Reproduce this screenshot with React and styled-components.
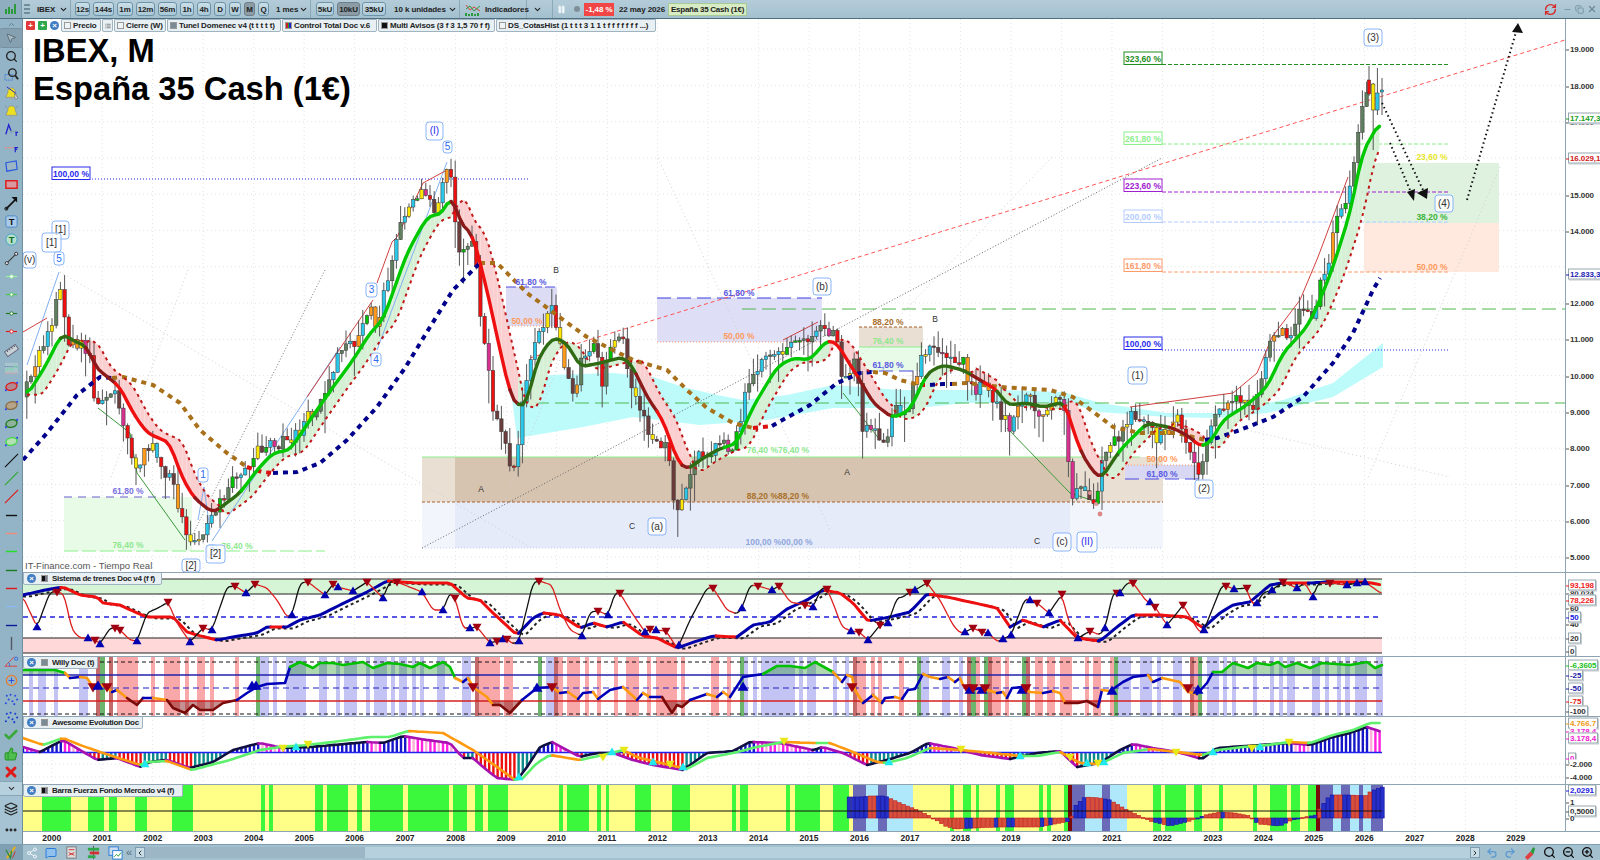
import React from "react"
import styled, { createGlobalStyle } from "styled-components"
import { ChevronDown, ChevronUp, ChevronLeft, ChevronRight, Share2, MessageSquare, Undo2, Redo2, ZoomIn, ZoomOut, Search, Check, ThumbsUp, X, Minus, Copy, RefreshCw, MoreHorizontal, Layers, Pause, List, MousePointer2 } from "lucide-react"

const GlobalStyle = createGlobalStyle`
  html, body { margin: 0; padding: 0; height: 100%; overflow: hidden; background: #fff; }
  #root { height: 100%; }
`
const FONT = `"Liberation Sans", Arial, sans-serif`

// ---------- data helpers ----------
function seeded(s) {
  return () => {
    s = (s * 16807) % 2147483647
    return (s - 1) / 2147483646
  }
}
function lerp(pts, x) {
  if (x <= pts[0][0]) return pts[0][1]
  for (let i = 1; i < pts.length; i++) {
    if (x <= pts[i][0]) {
      const [a, b] = [pts[i - 1], pts[i]]
      return a[1] + ((b[1] - a[1]) * (x - a[0])) / (b[0] - a[0] || 1)
    }
  }
  return pts[pts.length - 1][1]
}
function resample(pts, step = 4.2, k = 1) {
  const out = []
  for (let x = pts[0][0]; x <= pts[pts.length - 1][0]; x += step) out.push([x, lerp(pts, x)])
  return out.map((p, i) => {
    let sum = 0, n = 0
    for (let j = Math.max(0, i - k); j <= Math.min(out.length - 1, i + k); j++) { sum += out[j][1]; n++ }
    return [p[0], sum / n]
  })
}
const pathOf = (pts) => "M" + pts.map((p) => `${p[0].toFixed(1)} ${p[1].toFixed(1)}`).join(" L")

function colored(pts, colorOf, width, dash) {
  const segs = []
  let cur = null
  for (let i = 1; i < pts.length; i++) {
    const c = colorOf(pts[i - 1], pts[i])
    if (cur && cur.c === c) cur.pts.push(pts[i])
    else { cur = { c, pts: [pts[i - 1], pts[i]] }; segs.push(cur) }
  }
  return segs.map((s, i) => (
    <path key={i} d={pathOf(s.pts)} fill="none" stroke={s.c} strokeWidth={width} strokeDasharray={dash} strokeLinecap={dash ? "butt" : "round"} strokeLinejoin="round" />
  ))
}
const xOfYear = (y) => 51.7 + (y - 2000) * 50.49
const yOfPrice = (v) => 557 - (v - 5000) * 0.03628

// ---------- price ----------
const price = [[24,397],[40,350],[52,325],[60,282],[67,337],[88,350],[95,400],[117,397],[137,470],[150,445],[173,487],[187,543],[213,520],[230,480],[250,460],[267,443],[290,440],[323,400],[337,353],[353,347],[370,310],[377,333],[390,263],[403,220],[423,187],[437,213],[447,163],[453,180],[457,253],[473,243],[480,307],[493,407],[510,460],[517,467],[520,413],[533,347],[553,310],[557,337],[573,397],[582,360],[597,347],[603,400],[608,347],[623,343],[633,387],[647,430],[667,447],[677,517],[687,493],[693,460],[720,443],[733,450],[743,407],[747,383],[777,350],[813,337],[818,323],[837,337],[843,380],[857,363],[863,430],[883,440],[897,410],[907,413],[920,360],[930,345],[940,360],[963,360],[972,390],[990,387],[1000,417],[1010,427],[1025,393],[1043,417],[1060,393],[1067,417],[1070,497],[1077,490],[1097,500],[1103,447],[1117,443],[1130,410],[1157,437],[1180,420],[1197,467],[1200,473],[1213,413],[1233,397],[1253,410],[1270,337],[1293,333],[1298,307],[1313,320],[1320,280],[1330,253],[1333,227],[1347,200],[1357,147],[1360,113],[1367,93],[1369,80],[1373,107],[1377,93],[1382,92]]

const tunnel = resample([[27,395],[45,367],[62,333],[72,340],[88,347],[95,367],[120,387],[133,413],[147,433],[170,443],[180,473],[193,497],[213,513],[240,493],[257,470],[273,453],[290,450],[310,420],[333,387],[353,360],[370,333],[383,320],[407,253],[427,217],[443,213],[452,193],[460,223],[473,235],[487,290],[500,350],[510,393],[517,407],[527,403],[537,360],[553,337],[567,343],[580,367],[600,363],[623,357],[633,367],[647,397],[663,420],[677,460],[687,470],[700,460],[717,450],[737,443],[753,407],[777,367],[793,358],[810,360],[827,340],[837,343],[847,360],[860,380],[873,403],[893,418],[910,410],[927,373],[943,365],[963,370],[980,380],[997,390],[1007,405],[1027,403],[1043,407],[1065,402],[1073,430],[1083,457],[1100,480],[1107,470],[1120,450],[1147,423],[1173,428],[1190,437],[1200,447],[1210,443],[1223,420],[1247,405],[1267,387],[1283,353],[1307,327],[1320,300],[1333,267],[1350,213],[1363,150],[1368,143],[1382,118]])
const G = "#00c800", DG = "#2e6b12", R = "#ee1010", DR = "#8c1a1a"
const tunnelPhases = [[62,G],[90,DG],[118,DR],[195,R],[222,DR],[245,DG],[452,G],[475,DR],[510,R],[522,DR],[640,DG],[660,DR],[685,R],[692,DR],[725,DG],[832,G],[860,R],[895,DR],[930,G],[975,DG],[985,DR],[1000,R],[1066,DG],[1085,R],[1105,DR],[1122,DG],[1147,G],[1172,DG],[1195,DR],[1205,R],[1400,G]]
const phaseAt = (x) => tunnelPhases.find((p) => x <= p[0])[1]
const isUpPhase = (x) => [G, DG].includes(phaseAt(x))
const tunnelEdge = (x) => lerp(tunnel, x - 13) + (isUpPhase(x) ? 3 : -2)

const NAVY = "#00008b", BROWN = "#a8701a"
const longMa = [[23,460,NAVY],[47,433,NAVY],[77,395,NAVY],[100,377,NAVY],[112,378,NAVY],[123,377,BROWN],[153,385,BROWN],[180,403,BROWN],[200,430,BROWN],[227,453,BROWN],[247,467,BROWN],[262,472,"#dd1010"],[273,473,"#dd1010"],[297,472,NAVY],[320,463,NAVY],[347,440,NAVY],[377,407,NAVY],[405,368,NAVY],[430,327,NAVY],[453,290,NAVY],[480,263,NAVY],[497,263,BROWN],[527,293,BROWN],[573,327,BROWN],[587,337,BROWN],[633,360,BROWN],[667,370,BROWN],[687,390,BROWN],[707,408,BROWN],[733,423,BROWN],[753,428,BROWN],[772,426,"#dd1010"],[777,423,NAVY],[810,405,NAVY],[837,383,NAVY],[860,373,NAVY],[873,372,NAVY],[885,373,BROWN],[900,380,BROWN],[920,385,BROWN],[930,385,"#dd1010"],[943,384,NAVY],[952,384,NAVY],[967,383,BROWN],[1000,387,BROWN],[1050,390,BROWN],[1073,397,BROWN],[1100,417,BROWN],[1113,427,BROWN],[1140,433,BROWN],[1177,433,BROWN],[1205,440,BROWN],[1217,438,NAVY],[1240,430,NAVY],[1273,417,NAVY],[1303,397,NAVY],[1333,363,NAVY],[1353,333,NAVY],[1373,290,NAVY],[1380,278,NAVY]]

const cloud = [[510,383],[527,382],[550,375],[613,373],[653,377],[683,387],[717,395],[743,400],[787,395],[833,385],[900,390],[943,390],[1000,390],[1063,392],[1100,403],[1167,413],[1217,413],[1283,400],[1333,383],[1383,343],[1383,367],[1333,397],[1267,413],[1217,418],[1167,417],[1100,412],[1067,403],[967,403],[917,408],[833,408],[767,420],[700,425],[633,417],[583,427],[517,438]]

const rnd = seeded(4711)
const pick = (list) => {
  const r = rnd()
  let acc = 0
  for (const [c, w] of list) { acc += w; if (r <= acc) return c }
  return list[0][0]
}
const lastCandles = [
  { x: 1369, top: 80, h: 14, hi: 66, lo: 96, fill: "#ee1010" },
  { x: 1373.2, top: 84, h: 26, hi: 83, lo: 150, fill: "#ffe600" },
  { x: 1377.4, top: 93, h: 17, hi: 68, lo: 115, fill: "#2ac7e8" },
  { x: 1382, top: 90, h: 2, hi: 78, lo: 115, fill: "#2ac7e8" },
]
const candles = (() => {
  const out = []
  let prev = lerp(price, 24)
  for (let x = 26.8; x < 1367; x += 4.2) {
    const close = lerp(price, x) + (x > 1340 ? (rnd() - 0.5) * 5 : (rnd() - 0.5) * 15)
    const up = close < prev
    const fill = up
      ? pick([["#2ac7e8", 0.3], ["#5f7f5f", 0.4], ["#ffe600", 0.12], ["#00c000", 0.1], ["#ff9a1a", 0.08]])
      : pick([["#6b3c3c", 0.34], ["#ee1010", 0.3], ["#d8308f", 0.1], ["#ff9a1a", 0.1], ["#ffe600", 0.08], ["#2ac7e8", 0.08]])
    const top = Math.min(close, prev), bot = Math.max(close, prev)
    out.push({ x, top, h: Math.max(bot - top, 1.5), hi: top - rnd() * 17, lo: bot + rnd() * rnd() * 36, fill })
    prev = close
  }
  return [...out, ...lastCandles]
})()

// ---------- sistema de trenes ----------
const thinLine = [[23,597],[37,627,1],[50,592],[57,592,-1],[64,594],[72,630],[80,638],[88,638,1],[95,640,-1],[100,644,1],[110,628],[115,628,-1],[120,630,-1],[130,640],[137,641,1],[147,613],[160,607],[168,602,-1],[177,623],[190,642,1],[203,628,-1],[212,630,1],[227,587],[235,586,-1],[246,593,1],[255,584,-1],[267,588],[277,600],[287,617],[292,615,1],[300,583],[308,582,-1],[325,595,1],[333,584,-1],[338,587,1],[353,591,1],[367,582,-1],[383,598,1],[390,581],[397,582,-1],[422,592,1],[433,610],[443,610,1],[450,592],[455,598,-1],[463,628],[470,628,1],[477,627,-1],[490,643,1],[497,641,-1],[503,639,1],[507,639,-1],[513,644],[519,641,1],[533,583],[539,581,-1],[552,585],[560,610],[570,630],[582,636,1],[590,612],[598,611,-1],[608,615,1],[615,593],[620,593,-1],[630,610],[645,632,1],[650,629,-1],[656,630,1],[666,631,-1],[677,648],[679,645,1],[690,620],[707,588],[713,588,-1],[727,610],[737,614],[742,608,1],[750,585],[758,586,-1],[772,590,1],[779,586,-1],[790,602],[805,605,-1],[813,607,1],[822,587],[827,589,-1],[833,603],[842,627],[851,631,1],[859,632,-1],[868,640,1],[880,625,-1],[888,623,1],[897,598],[903,597],[910,592,-1],[915,590,1],[927,583,-1],[940,600],[953,625],[960,633],[965,632,1],[973,628,-1],[982,632,-1],[988,633,1],[998,642],[1003,639,1],[1011,635,1],[1025,599],[1030,600,1],[1037,603,-1],[1049,613,1],[1062,594,-1],[1068,620],[1078,638,1],[1090,631,-1],[1100,635],[1105,628,1],[1113,593],[1117,593,-1],[1120,593,1],[1127,583],[1133,583,-1],[1147,602],[1150,602,1],[1155,607,-1],[1167,625,1],[1177,613],[1183,605,-1],[1200,633],[1204,630,1],[1222,585],[1226,586,-1],[1234,589,1],[1247,588,-1],[1251,603],[1257,603,1],[1263,593],[1272,590,1],[1283,582,-1],[1297,588,1],[1305,583],[1313,597,1],[1318,583],[1330,583,-1],[1347,585,1],[1357,583,1],[1365,582,1],[1382,594]]
const thinSmooth = resample(thinLine, 2, 1)
const thickLine = resample([[23,595],[45,590],[63,587],[80,595],[97,597],[103,603],[120,605],[137,613],[147,617],[173,617],[187,632],[197,635],[217,640],[233,637],[257,633],[267,627],[287,627],[300,620],[320,615],[340,605],[367,592],[387,581],[417,583],[450,583],[467,598],[480,600],[493,613],[517,635],[533,618],[543,613],[560,615],[580,628],[593,623],[607,627],[623,622],[643,636],[657,638],[677,648],[697,641],[713,636],[737,637],[753,625],[770,622],[787,609],[807,600],[823,590],[840,593],[853,603],[868,621],[890,617],[910,612],[927,594],[947,597],[970,602],[997,608],[1010,627],[1023,620],[1043,627],[1060,620],[1077,638],[1100,641],[1117,627],[1133,615],[1160,615],[1187,617],[1203,628],[1220,613],[1233,605],[1250,602],[1270,585],[1283,583],[1310,583],[1327,582],[1365,582],[1382,585]], 4.2, 0)

// ---------- willy ----------
const willyLine = [[23,670],[43,670],[55,670],[65,673],[70,678],[80,677],[87,678],[93,687],[100,685],[107,687],[112,692],[117,690],[127,698],[137,705],[143,698],[153,698],[167,700],[173,708],[185,713],[193,705],[200,710],[213,710],[223,703],[237,700],[247,693],[257,687],[267,684],[285,683],[290,667],[300,662],[313,668],[320,663],[333,663],[343,665],[363,662],[373,668],[387,663],[400,664],[413,667],[420,663],[430,668],[443,662],[450,667],[455,678],[463,682],[468,678],[473,687],[480,692],[487,697],[493,705],[500,705],[510,713],[522,700],[537,688],[552,687],[560,693],[568,692],[578,699],[583,693],[593,692],[598,699],[610,690],[623,687],[637,700],[643,693],[650,697],[662,697],[672,713],[677,705],[682,707],[690,700],[707,694],[717,697],[723,692],[730,697],[743,677],[763,674],[777,666],[790,666],[805,668],[815,662],[833,672],[842,682],[847,675],[852,677],[855,690],[863,703],[873,695],[882,703],[885,698],[895,697],[902,699],[908,690],[915,689],[923,674],[930,677],[940,679],[948,677],[955,682],[960,678],[963,685],[967,690],[982,688],[997,693],[1003,692],[1007,698],[1012,688],[1023,687],[1030,692],[1043,693],[1053,691],[1060,693],[1065,703],[1078,703],[1087,701],[1098,707],[1102,690],[1110,691],[1123,682],[1133,677],[1148,675],[1153,682],[1162,678],[1180,682],[1188,692],[1197,694],[1207,683],[1213,672],[1222,672],[1233,663],[1248,668],[1257,663],[1270,665],[1278,662],[1285,667],[1297,663],[1310,668],[1322,663],[1350,665],[1367,662],[1375,668],[1382,665]]
const P = "#c4c4f4", RB = "#f8a8a8", DB = "#c46a6a", GB = "#6db56d"
const willyBands = [[29,33,P],[38,46,P],[54,58,P],[79,88,P],[96,100,DB],[100,105,GB],[109,113,DB],[117,138,RB],[151,155,RB],[164,180,RB],[185,189,RB],[197,205,RB],[210,214,RB],[235,239,RB],[256,260,GB],[260,269,P],[273,277,P],[286,306,P],[319,327,P],[336,340,P],[344,357,P],[366,370,P],[374,387,P],[391,395,P],[399,407,P],[412,416,P],[420,424,P],[437,445,P],[462,471,P],[475,479,DB],[479,500,RB],[504,513,RB],[538,542,GB],[546,554,P],[554,558,DB],[558,563,RB],[567,580,RB],[585,589,RB],[597,601,RB],[614,618,RB],[626,639,RB],[647,651,RB],[656,677,RB],[681,685,RB],[711,719,RB],[727,731,RB],[740,744,GB],[744,748,P],[753,757,P],[761,786,P],[786,795,P],[799,803,P],[807,816,P],[833,837,P],[845,849,P],[853,857,DB],[857,866,RB],[871,875,RB],[878,882,RB],[899,904,RB],[917,921,GB],[921,929,P],[942,950,P],[959,963,P],[967,971,DB],[971,976,GB],[976,980,RB],[984,988,GB],[988,992,DB],[992,1001,RB],[1005,1009,RB],[1022,1026,GB],[1026,1030,DB],[1035,1043,RB],[1047,1055,RB],[1060,1072,RB],[1085,1089,RB],[1093,1101,RB],[1110,1114,RB],[1114,1118,GB],[1118,1131,P],[1140,1152,P],[1157,1161,P],[1173,1182,P],[1190,1194,DB],[1194,1198,RB],[1198,1202,GB],[1207,1219,P],[1223,1227,P],[1232,1236,P],[1253,1257,P],[1270,1274,P],[1279,1283,P],[1287,1295,P],[1312,1320,P],[1325,1329,P],[1337,1341,P],[1345,1350,P],[1355,1367,P],[1376,1383,P]]
const willyTris = [[93,687,-1],[98,686,1],[107,687,-1],[256,686,1],[252,686,1],[473,687,-1],[537,688,1],[552,687,-1],[743,687,1],[852,687,-1],[967,688,-1],[970,690,1],[973,688,-1],[982,690,1],[985,688,-1],[1022,690,1],[1026,688,-1],[1112,691,1],[1188,688,-1],[1198,690,1]]

// ---------- awesome ----------
const aoSignal = resample([[23,738],[43,745],[63,738],[80,745],[103,753],[140,765],[147,762],[167,761],[192,770],[230,760],[260,750],[280,747],[307,745],[333,742],[370,737],[390,737],[408,731],[443,733],[473,750],[497,767],[515,780],[523,778],[537,763],[550,755],[580,760],[603,755],[623,750],[637,757],[657,762],[687,769],[707,758],[733,753],[757,747],[783,742],[813,743],[830,743],[853,752],[877,762],[887,763],[907,758],[930,748],[960,750],[993,753],[1020,756],[1037,756],[1060,752],[1080,763],[1100,764],[1123,753],[1150,749],[1177,752],[1203,755],[1217,750],[1243,747],[1267,745],[1290,742],[1310,743],[1333,735],[1353,730],[1370,723],[1382,723]], 4.2, 0)
const aoMain = resample([[23,747],[40,752],[63,740],[80,750],[97,760],[117,758],[140,767],[150,762],[167,760],[190,768],[213,762],[233,750],[260,743],[283,748],[310,747],[333,745],[367,742],[383,743],[403,736],[427,740],[450,743],[463,758],[473,758],[483,767],[497,778],[517,780],[527,767],[540,747],[552,742],[563,748],[580,757],[597,753],[613,753],[633,760],[653,765],[683,770],[707,753],[733,751],[750,742],[780,743],[813,750],[823,747],[843,753],[867,765],[887,760],[910,753],[928,743],[953,748],[980,755],[1010,759],[1037,753],[1060,751],[1077,767],[1100,763],[1120,750],[1133,744],[1153,748],[1177,752],[1202,759],[1217,748],[1260,745],[1290,743],[1310,745],[1333,737],[1350,733],[1367,727],[1382,732]], 4.2, 0)
const aoTris = [[145,764,1],[283,748,-1],[296,747,1],[308,744,-1],[519,777,1],[603,757,-1],[612,752,1],[624,750,-1],[653,762,1],[670,764,-1],[683,767,1],[784,741,-1],[889,762,1],[961,749,-1],[1020,756,1],[1070,757,-1],[1087,763,1],[1098,763,-1],[1104,762,1],[1176,752,-1],[1213,752,1],[1252,748,-1],[1260,747,1],[1289,742,-1]]

// ---------- barra ----------
const BY = "#ffff88", BG = "#3cf83c", BP = "#6a6ab8", BL = "#aee8fa", BM = "#7a0a0a"
const barraBands = [[42,BY],[71,BG],[88,BY],[104,BG],[109,BY],[117,BG],[135,BY],[147,BG],[172,BY],[193,BG],[261,BY],[265,BG],[269,BY],[273,BG],[315,BY],[323,BG],[327,BY],[348,BG],[357,BY],[362,BG],[370,BY],[403,BG],[408,BY],[449,BG],[453,BY],[467,BG],[475,BY],[483,BG],[488,BY],[508,BG],[559,BY],[563,BG],[567,BY],[589,BG],[597,BY],[601,BG],[606,BY],[609,BG],[635,BY],[651,BG],[672,BY],[690,BG],[732,BY],[736,BG],[740,BY],[748,BG],[786,BY],[790,BG],[795,BY],[820,BG],[833,BY],[849,BG],[853,BY],[866,BP],[878,BL],[887,BP],[913,BL],[950,BY],[954,BG],[963,BY],[971,BG],[976,BY],[979,BG],[996,BY],[1000,BG],[1005,BY],[1014,BG],[1039,BY],[1043,BG],[1047,BY],[1051,BG],[1064,BY],[1068,BG],[1072,BM],[1085,BP],[1102,BL],[1110,BP],[1127,BL],[1153,BY],[1161,BG],[1165,BY],[1186,BG],[1194,BY],[1202,BG],[1219,BY],[1223,BG],[1253,BY],[1257,BG],[1270,BY],[1287,BG],[1291,BY],[1300,BG],[1308,BY],[1316,BG],[1320,BM],[1333,BP],[1341,BL],[1350,BP],[1359,BL],[1363,BP],[1371,BL],[1383,BP]]
const barraHist = [[849,21],[860,21],[870,22],[885,22],[900,15],[915,9],[930,2],[945,-8],[955,-11],[975,-10],[1000,-9],[1040,-9],[1060,-5],[1070,-3],[1075,12],[1085,21],[1100,20],[1110,18],[1127,8],[1140,2],[1150,-3],[1170,-8],[1190,-3],[1205,3],[1220,6],[1235,5],[1250,2],[1258,-6],[1280,-8],[1290,-3],[1300,0],[1316,3],[1320,10],[1330,23],[1350,23],[1365,22],[1371,27],[1383,31]]
const bandAt = (x) => (barraBands.find((b) => x <= b[0]) || barraBands[barraBands.length - 1])[1]

// ---------- chart annotations ----------
const pctLabels = [
  [128,491,"61,80 %","#7a6fe0"],[128,545,"76,40 %","#8ee88e"],[237,546,"76,40 %","#8ee88e"],
  [531,282,"61,80 %","#5a5ae0"],[527,321,"50,00 %","#ff9a5a"],[739,293,"61,80 %","#5a5ae0"],[739,336,"50,00 %","#ff9a5a"],
  [778,450,"76,40 %76,40 %","#8ee88e"],[778,496,"88,20 %88,20 %","#a8702a"],[779,542,"100,00 %00,00 %","#8ea6dc"],
  [888,322,"88,20 %","#a8702a"],[888,341,"76,40 %","#8ee88e"],[888,365,"61,80 %","#5a5ae0"],
  [1162,459,"50,00 %","#ff9a5a"],[1162,474,"61,80 %","#5a5ae0"],
  [1432,157,"23,60 %","#e6e62a"],[1432,217,"38,20 %","#3cb43c"],[1432,267,"50,00 %","#ff9a5a"],
]
const levels = [
  [1124,52,"323,60 %","#1f8f1f",64.5,1449,"4 2"],[1124,132,"261,80 %","#8cf08c",144,1449,"4 2"],[1124,179,"223,60 %","#a020d0",192,1449,"4 2"],
  [1124,210,"200,00 %","#b4ccff",222,1449,"4 2"],[1124,259,"161,80 %","#ff9a6a",272,1449,"4 2"],[1124,337,"100,00 %","#2a2af0",350,1449,"1 2"],
  [52,167,"100,00 %","#2a2af0",179,530,"1 2"],
]
const waves = [
  [1364,29,18,17,"(3)"],[1435,195,18,17,"(4)"],[1128,367,19,17,"(1)"],[1195,480,18,18,"(2)"],[648,518,18,17,"(a)"],[813,278,18,17,"(b)"],
  [1053,533,18,18,"(c)"],[1077,532,20,20,"(II)","#2a2aee"],[426,122,17,18,"(I)","#2a2aee"],[443,141,9,12,"5","#2a6aee"],[52,221,17,18,"[1]"],[42,233,19,19,"[1]"],
  [54,252,10,13,"5","#2a6aee"],[23,252,13,16,"(v)"],[366,283,11,14,"3","#2a6aee"],[371,353,10,13,"4","#2a6aee"],[198,468,10,14,"1","#2a6aee"],[207,545,10,13,"2","#2a6aee"],[206,545,19,18,"[2]"],[182,559,18,13,"[2]"],
]
const letters = [[481,489,"A"],[847,472,"A"],[632,526,"C"],[935,319,"B"],[1037,541,"C"],[556,270,"B"]]
const faint = [[60,272,530,547],[188,270,110,480],[658,158,830,530],[1052,157,800,420],[1500,167,1367,480],[1247,430,1450,477],[560,360,505,500]]
const zigzag = [
  ["#7fb0f0",[[27,365],[59,272]]],["#7fb0f0",[[212,541],[340,347]]],["#7fb0f0",[[377,350],[447,162]]],["#7fb0f0",[[198,520],[204,487],[210,530]]],
  ["#3a9a3a",[[98,408],[130,433],[137,473],[185,540]]],["#3a9a3a",[[843,393],[880,440]]],["#3a9a3a",[[1007,428],[1070,493],[1100,503]]],
  ["#d04040",[[23,332],[47,318]]],["#d04040",[[307,397],[373,300]]],["#d04040",[[377,283],[392,242],[397,237],[423,183],[447,170]]],["#d04040",[[783,340],[818,322]]],
  ["#d04040",[[1130,407],[1233,393],[1257,373],[1272,337],[1300,300]]],["#d04040",[[1300,300],[1318,257],[1348,177]]],
]

function Tri({ x, y, up, color, s = 5 }) {
  const pts = up ? `${x - s},${y + s * 0.7} ${x + s},${y + s * 0.7} ${x},${y - s}` : `${x - s},${y - s * 0.7} ${x + s},${y - s * 0.7} ${x},${y + s}`
  return <polygon points={pts} fill={color} />
}

function Grid({ top, bottom, prices }) {
  const years = Array.from({ length: 30 }, (_, i) => xOfYear(2000 + i))
  return (
    <g stroke="#e4e4e4" strokeWidth="1" strokeDasharray="1 3">
      {years.map((x) => <line key={x} x1={x} x2={x} y1={top} y2={bottom} />)}
      {prices && prices.map((y) => <line key={y} x1={23} x2={1565} y1={y} y2={y} />)}
    </g>
  )
}

function MainChart() {
  const ticks = Array.from({ length: 15 }, (_, i) => yOfPrice(5000 + i * 1000))
  return (
    <Svg viewBox="23 19 1542 553" width="1542" height="553">
      <Grid top={19} bottom={572} prices={ticks} />
      <rect x="64" y="497" width="128" height="54" fill="#e7fbe7" />
      <rect x="422" y="457" width="33" height="45" fill="#e9dfd3" />
      <rect x="455" y="457" width="615" height="45" fill="#d7c4b0" />
      <rect x="1070" y="457" width="93" height="45" fill="#e9dfd3" />
      <rect x="422" y="502" width="33" height="46" fill="#f3f5fd" />
      <rect x="455" y="502" width="615" height="46" fill="#e6ebfa" />
      <rect x="1070" y="502" width="93" height="46" fill="#f3f5fd" />
      <rect x="506" y="287" width="51" height="39" fill="#dcdcf5" />
      <rect x="657" y="298" width="165" height="44" fill="#dedef6" />
      <rect x="859" y="327" width="64" height="20" fill="#e9dfd3" />
      <rect x="859" y="347" width="64" height="24" fill="#e8fbe8" />
      <rect x="1125" y="465" width="75" height="14" fill="#d8d8f5" />
      <rect x="1364" y="163" width="135" height="60" fill="#dff2df" />
      <rect x="1364" y="223" width="135" height="49" fill="#ffe9df" />
      <polygon points={cloud.map((p) => p.join(",")).join(" ")} fill="#bdfbfb" />

      <g fill="none" strokeWidth="1">
        <line x1="64" x2="175" y1="497" y2="497" stroke="#6a5fd0" strokeDasharray="8 6" />
        <line x1="64" x2="325" y1="551" y2="551" stroke="#8cf08c" strokeDasharray="14 4" />
        <line x1="422" x2="1140" y1="457" y2="457" stroke="#8cf08c" />
        <line x1="422" x2="1163" y1="502" y2="502" stroke="#a8602a" strokeDasharray="3 2" />
        <line x1="422" x2="1163" y1="548" y2="548" stroke="#c4d0f0" strokeDasharray="1 2" />
        <line x1="506" x2="557" y1="287" y2="287" stroke="#4a4ae0" strokeDasharray="10 3" />
        <line x1="506" x2="557" y1="326" y2="326" stroke="#ff9a6a" strokeDasharray="1 2" />
        <line x1="657" x2="822" y1="298" y2="298" stroke="#3a3ae0" strokeDasharray="14 6" />
        <line x1="657" x2="822" y1="342" y2="342" stroke="#ff9a6a" strokeDasharray="1 2" />
        <line x1="859" x2="923" y1="327" y2="327" stroke="#a8602a" strokeDasharray="3 2" />
        <line x1="859" x2="923" y1="347" y2="347" stroke="#8cf08c" />
        <line x1="859" x2="923" y1="371" y2="371" stroke="#4a4ae0" strokeDasharray="14 6" />
        <line x1="1125" x2="1200" y1="465" y2="465" stroke="#ff9a6a" strokeDasharray="1 2" />
        <line x1="1125" x2="1200" y1="479" y2="479" stroke="#4a4ae0" strokeDasharray="14 6" />
        <line x1="742" x2="1565" y1="309" y2="309" stroke="#4fb84f" strokeDasharray="14 6" />
        <line x1="535" x2="1565" y1="403" y2="403" stroke="#4fb84f" strokeDasharray="14 6" />
        {faint.map(([a, b, c, d], i) => <line key={i} x1={a} y1={b} x2={c} y2={d} stroke="#cfcfcf" strokeDasharray="1 3" />)}
        <line x1="325" y1="270" x2="190" y2="540" stroke="#777" strokeDasharray="1 2" />
        <line x1="422" y1="548" x2="1162" y2="158" stroke="#666" strokeDasharray="1 2" />
        <line x1="530" y1="358" x2="1565" y2="40" stroke="#f55" strokeDasharray="4 3" />
        {levels.map(([, , , c, y, x2, d]) => <line key={y + c} x1={x2 === 530 ? 92 : 1162} x2={x2} y1={y} y2={y} stroke={c} strokeDasharray={d} />)}
      </g>

      {tunnel.slice(1).map((p, i) => {
        const a = tunnel[i]
        return <polygon key={i} points={`${a[0]},${a[1]} ${p[0]},${p[1]} ${p[0]},${tunnelEdge(p[0])} ${a[0]},${tunnelEdge(a[0])}`} fill={isUpPhase(p[0]) ? "#d6f0d6" : "#fbcfcf"} />
      })}
      {zigzag.map(([c, pts], i) => <path key={i} d={pathOf(pts)} fill="none" stroke={c} strokeWidth="1" />)}

      {candles.map((c) => (
        <g key={c.x}>
          <line x1={c.x} x2={c.x} y1={c.hi} y2={c.lo} stroke="#555" strokeWidth="1" />
          <rect x={c.x - 1.7} y={c.top} width="3.4" height={c.h} fill={c.fill} stroke="#333" strokeWidth="0.5" />
        </g>
      ))}

      {colored(longMa, (a, b) => b[2], 4, "5 5")}
      {colored(tunnel.map((p) => [p[0], tunnelEdge(p[0])]), () => "#c01818", 2, "3 4")}
      {colored(tunnel, (a, b) => phaseAt(b[0]), 3.4)}

      <g fill="none" stroke="#111" strokeWidth="2" strokeDasharray="1.5 3">
        <line x1="1382" y1="103" x2="1423" y2="190" />
        <line x1="1390" y1="143" x2="1410" y2="190" />
        <line x1="1467" y1="200" x2="1516" y2="32" />
      </g>
      <polygon points="1427,199 1417,193 1428,188" fill="#111" />
      <polygon points="1414,201 1407,192 1415,189" fill="#111" />
      <polygon points="1518,23 1523,33 1512,32" fill="#111" />
      <circle cx="1100" cy="514" r="2.4" fill="#d88" />
      <circle cx="1090" cy="493" r="2" fill="#d99" />
      <circle cx="1096" cy="504" r="2" fill="#d99" />

      {letters.map(([x, y, t]) => <PlainText key={x} x={x} y={y + 3} textAnchor="middle">{t}</PlainText>)}
      {pctLabels.map(([x, y, t, c], i) => <PctText key={i} x={x} y={y + 3} fill={c} textAnchor="middle">{t}</PctText>)}
      {waves.map(([x, y, w, h, t, c], i) => (
        <g key={i}>
          <rect x={x} y={y} width={w} height={h} rx="3" fill="#fff" fillOpacity="0.75" stroke="#8ab4f8" strokeWidth="1" />
          <WaveText x={x + w / 2} y={y + h / 2 + 3} fill={c || "#333"} textAnchor="middle">{t}</WaveText>
        </g>
      ))}
      {levels.map(([x, y, t, c], i) => (
        <g key={i}>
          <rect x={x} y={y} width="38" height="12.5" fill="#fff" stroke={c} strokeWidth="1" />
          <PctText x={x + 19} y={y + 9.5} fill={c} textAnchor="middle">{t}</PctText>
        </g>
      ))}
    </Svg>
  )
}

function TrainsChart() {
  const lag = thickLine.map((p) => [p[0], lerp(thickLine, p[0] - 7) + 1.5])
  return (
    <Svg viewBox="23 572 1542 84" width="1542" height="84">
      <Grid top={572} bottom={656} prices={[594, 638]} />
      <rect x="23" y="579" width="1359" height="15" fill="#d6f5d6" />
      <rect x="23" y="638" width="1359" height="15" fill="#ffd9d9" />
      <g stroke="#222" strokeWidth="1">
        <line x1="23" x2="1382" y1="579" y2="579" />
        <line x1="23" x2="1382" y1="594" y2="594" />
        <line x1="23" x2="1382" y1="638" y2="638" />
        <line x1="23" x2="1382" y1="653" y2="653" />
      </g>
      <line x1="23" x2="1382" y1="617" y2="617" stroke="#2222dd" strokeWidth="1.4" strokeDasharray="5 4" />
      <path d={pathOf(lag)} fill="none" stroke="#222" strokeWidth="2" strokeDasharray="3 3" />
      {colored(thickLine, (a, b) => (b[1] < a[1] ? "#0000aa" : "#ee1010"), 3)}
      {colored(thinSmooth, (a, b) => (b[1] < a[1] ? "#111" : "#dd2020"), 1.3)}
      {thinLine.filter((p) => p[2]).map((p, i) =>
        p[2] > 0 ? <Tri key={i} x={p[0]} y={p[1]} up color="#0000b0" s={4.5} /> : <Tri key={i} x={p[0]} y={p[1]} color="#a00010" s={4.5} />
      )}
    </Svg>
  )
}

function WillyChart() {
  const clipTop = willyLine.map((p) => [p[0], Math.min(p[1], 675)])
  const clipBot = willyLine.map((p) => [p[0], Math.max(p[1], 701)])
  const fill = (pts, base) => `M${pts[0][0]} ${base} L` + pts.map((p) => p.join(" ")).join(" L") + ` L${pts[pts.length - 1][0]} ${base}Z`
  const colorOf = (a, b) => {
    const y = (a[1] + b[1]) / 2
    if (y < 675) return "#00c000"
    if (y > 701) return "#7a0a0a"
    return b[1] <= a[1] ? "#0000b8" : "#ff9a10"
  }
  return (
    <Svg viewBox="23 656 1542 60" width="1542" height="60">
      <Grid top={656} bottom={716} />
      {willyBands.map(([a, b, c]) => <rect key={a + c} x={a} y="657" width={b - a} height="59" fill={c} />)}
      <path d={fill(clipTop, 675)} fill="#1e8f1e" fillOpacity="0.35" />
      <path d={fill(clipBot, 701)} fill="#7a0a0a" fillOpacity="0.45" />
      <line x1="23" x2="1382" y1="662" y2="662" stroke="#111" strokeDasharray="4 3" />
      <line x1="23" x2="1382" y1="714" y2="714" stroke="#111" strokeDasharray="4 3" />
      <line x1="23" x2="1382" y1="675" y2="675" stroke="#2222aa" strokeWidth="1.4" />
      <line x1="23" x2="1382" y1="688" y2="688" stroke="#2222cc" strokeWidth="1.2" strokeDasharray="6 4" />
      <line x1="23" x2="1382" y1="701" y2="701" stroke="#d42020" strokeWidth="1.6" />
      {colored(willyLine, colorOf, 2.6)}
      {willyTris.map(([x, y, d], i) => (d > 0 ? <Tri key={i} x={x} y={y} up color="#0000b8" s={5.5} /> : <Tri key={i} x={x} y={y} color="#a00010" s={5.5} />))}
    </Svg>
  )
}

function AwesomeChart() {
  return (
    <Svg viewBox="23 716 1542 68" width="1542" height="68">
      <Grid top={716} bottom={784} prices={[764, 777]} />
      {aoMain.map((p, i) => {
        const prev = aoMain[Math.max(0, i - 1)][1]
        const rising = p[1] <= prev
        const above = p[1] < 752.5
        const color = above ? (rising ? "#1616c8" : i % 3 ? "#ff20e0" : "#ffb0d8") : rising ? "#0d8a8a" : "#ee1010"
        return <line key={p[0]} x1={p[0]} x2={p[0]} y1="752.5" y2={p[1]} stroke={color} strokeWidth="2.4" />
      })}
      <line x1="23" x2="1382" y1="752.5" y2="752.5" stroke="#2222ee" strokeWidth="1.4" />
      {colored(aoMain, (a, b) => (b[1] <= a[1] ? "#101040" : "#a810b0"), 2.6)}
      {colored(aoSignal, (a, b) => (b[1] <= a[1] ? "#5cf06c" : "#ff9a10"), 2.6)}
      {aoTris.map(([x, y, d], i) => (d > 0 ? <Tri key={i} x={x} y={y} up color="#20e8f0" s={4.5} /> : <Tri key={i} x={x} y={y} color="#e8e818" s={4.5} />))}
    </Svg>
  )
}

function BarraChart() {
  const bars = []
  for (let x = 849; x <= 1383; x += 4.2) bars.push([x, lerp(barraHist, x)])
  let from = 23
  return (
    <Svg viewBox="23 784 1542 47" width="1542" height="47">
      <Grid top={784} bottom={831} />
      {barraBands.map(([to, c]) => {
        const r = <rect key={to} x={from} y="784" width={to - from} height="47" fill={c} />
        from = to
        return r
      })}
      {bars.map(([x, h]) => {
        const blue = [BP, BG].includes(bandAt(x))
        return <rect key={x} x={x - 1.8} y={h >= 0 ? 818 - h : 818} width="3.6" height={Math.max(Math.abs(h), 1)} fill={blue ? "#2530c8" : "#d8503c"} stroke={blue ? "#1010a0" : "#c01818"} strokeWidth="0.6" />
      })}
      <line x1="23" x2="1382" y1="811" y2="811" stroke="#111" strokeWidth="1" />
    </Svg>
  )
}

// ---------- page ----------
const Page = styled.div`
  height: 100vh;
  display: flex;
  flex-direction: column;
  font-family: ${FONT};
  color: #222;
`
const TopBar = styled.div`
  height: 18px;
  border-bottom: 1px solid #4f6e80;
  background: linear-gradient(#b4ccd9, #a3c0cf);
  display: flex;
  align-items: center;
  box-sizing: content-box;
  font-size: 8px;
  font-weight: 700;
  letter-spacing: -0.1px;
  white-space: nowrap;
`
const Brand = styled.div`
  width: 22px;
  height: 18px;
  background: #8fafc1;
  border-right: 1px solid #7a99ab;
  display: flex;
  align-items: center;
  justify-content: center;
  box-sizing: border-box;
`
const Grip = styled.div`
  width: 6px;
  height: 10px;
  margin: 0 5px 0 2px;
  background: repeating-linear-gradient(#6f8a99 0 2px, transparent 2px 4px);
  border-radius: 1px;
`
const Drop = styled.div`
  display: flex;
  align-items: center;
  justify-content: space-between;
  width: ${(p) => p.$w}px;
  margin-left: ${(p) => p.$ml || 0}px;
  height: 18px;
  padding: 0 2px;
  box-sizing: border-box;
  border-right: 1px solid #8aa8b8;
`
const Btn = styled.div`
  width: ${(p) => p.$w}px;
  height: 14px;
  margin-left: ${(p) => p.$ml ?? 3}px;
  border: 1px solid ${(p) => (p.$on ? "#6f7f89" : "#6d93a8")};
  border-radius: 3px;
  background: ${(p) => (p.$on ? "#8b9ca6" : "linear-gradient(#cbdfe8, #a9c7d6)")};
  display: flex;
  align-items: center;
  justify-content: center;
  box-sizing: border-box;
`
const Change = styled.div`
  margin-left: 4px;
  width: 30px;
  height: 13px;
  background: #f24646;
  color: #fff;
  display: flex;
  align-items: center;
  justify-content: center;
`
const DateText = styled.div`
  margin-left: 5px;
  width: 45px;
`
const NameChip = styled.div`
  margin-left: 4px;
  height: 13px;
  padding: 0 2px;
  background: #d8ecc4;
  border: 1px solid #a8c898;
  display: flex;
  align-items: center;
  box-sizing: border-box;
  letter-spacing: -0.25px;
`
const TopRight = styled.div`
  margin-left: auto;
  display: flex;
  align-items: center;
  gap: 3px;
  padding-right: 3px;
  color: #6f8896;
`
const Body = styled.div`
  flex: 1;
  min-height: 0;
  display: flex;
`
const Sidebar = styled.div`
  width: 23px;
  flex: none;
  background: #93b4c6;
  border-right: 1px solid #6f8ea0;
  box-sizing: border-box;
  display: flex;
  flex-direction: column;
`
const SideHead = styled.div`
  height: 10px;
  display: flex;
  align-items: center;
  justify-content: center;
  color: #51707f;
`
const ToolCell = styled.div`
  height: 18.35px;
  flex: none;
  display: flex;
  align-items: center;
  justify-content: center;
  ${(p) => p.$on && `background: #85a0b0; outline: 1px solid #7890a0; border-radius: 2px;`}
`
const SideFold = styled.div`
  height: 13px;
  background: #b6d0dd;
  border-top: 1px solid #86a5b6;
  border-bottom: 1px solid #86a5b6;
  display: flex;
  align-items: center;
  justify-content: center;
  color: #333;
`
const SideFoot = styled.div`
  flex: 1;
  display: flex;
  flex-direction: column;
  align-items: center;
  justify-content: space-around;
  background: #a5c3d2;
  color: #222;
  padding: 2px 0 4px;
`
const Main = styled.div`
  flex: 1;
  min-width: 0;
  display: flex;
  flex-direction: column;
`
const Panel = styled.div`
  height: ${(p) => p.$h}px;
  flex: none;
  display: flex;
  box-sizing: border-box;
`
const Plot = styled.div`
  position: relative;
  flex: 1;
  min-width: 0;
  overflow: hidden;
`
const Svg = styled.svg`
  display: block;
`
const PlainText = styled.text`
  font-family: ${FONT};
  font-size: 8.5px;
  fill: #333;
`
const PctText = styled.text`
  font-family: ${FONT};
  font-size: 8.5px;
  font-weight: 700;
`
const WaveText = styled.text`
  font-family: ${FONT};
  font-size: 10px;
`
const AxisCol = styled.div`
  width: 35px;
  flex: none;
  position: relative;
  border-left: 1px solid #8ea4b3;
  box-sizing: border-box;
  overflow: hidden;
  background: #fff;
`
const Tick = styled.div`
  position: absolute;
  left: 4px;
  transform: translateY(-50%);
  font-size: 8px;
  font-weight: 700;
  line-height: 9px;
  letter-spacing: -0.1px;
  white-space: nowrap;
  color: ${(p) => p.$c || "#333"};
  background: #fff;
  ${(p) => p.$box && `border: 1px solid #9aa8b0; padding: 0 1px; left: 2px; box-shadow: 1px 1px 0 #c4ccd2;`}
  &::before {
    content: "";
    position: absolute;
    left: ${(p) => (p.$box ? -3 : -4)}px;
    top: 50%;
    width: 3px;
    height: 1px;
    background: ${(p) => p.$c || "#555"};
  }
`
const Divider = styled.div`
  height: 0;
  border-top: 1px solid #8ea4b3;
  margin-bottom: -1px;
  position: relative;
  z-index: 2;
`
const LegendRow = styled.div`
  position: absolute;
  top: 0;
  left: 0;
  display: flex;
  align-items: center;
  height: 13px;
  font-size: 8px;
  font-weight: 700;
  letter-spacing: -0.15px;
  white-space: nowrap;
`
const Chip = styled.div`
  display: flex;
  align-items: center;
  gap: 2px;
  height: 13px;
  width: ${(p) => (p.$w ? `${p.$w}px` : "auto")};
  padding: 0 1px 0 2px;
  margin-left: 1px;
  background: #e8f0f4;
  border: 1px solid #9fb4c0;
  border-radius: 0 0 2px 2px;
  box-sizing: border-box;
`
const Swatch = styled.span`
  width: 7px;
  height: 7px;
  flex: none;
  background: ${(p) => p.$bg};
  border: 1px solid #999;
  box-sizing: border-box;
`
const RoundIcon = styled.span`
  width: 9px;
  height: 9px;
  margin: 0 3px 0 3px;
  border-radius: ${(p) => p.$r || "50%"};
  background: ${(p) => p.$bg};
  color: #fff;
  font-size: 8px;
  line-height: 9px;
  text-align: center;
  flex: none;
`
const Title = styled.div`
  position: absolute;
  left: 10px;
  top: 13px;
  font-size: 32.7px;
  font-weight: 700;
  line-height: 37.5px;
  letter-spacing: 0;
  color: #000;
  pointer-events: none;
`
const Source = styled.div`
  position: absolute;
  left: 2px;
  bottom: 0;
  font-size: 9.5px;
  line-height: 12px;
  color: #555;
`
const PanelChip = styled(Chip)`
  margin-left: 0;
  letter-spacing: -0.3px;
  padding-left: 0;
`
const DateAxis = styled.div`
  height: 13px;
  flex: none;
  display: flex;
  padding-left: 3.5px;
  border-top: 1px solid #8ea4b3;
  box-sizing: border-box;
`
const Year = styled.div`
  width: 50.49px;
  flex: none;
  text-align: center;
  font-size: 8.5px;
  font-weight: 700;
  line-height: 12px;
  color: #222;
`
const BottomBar = styled.div`
  height: 16px;
  flex: none;
  display: flex;
  align-items: center;
  background: #a3c0cf;
  border-top: 1px solid #7f9db0;
  box-sizing: border-box;
`
const PenBox = styled.div`
  width: 23px;
  height: 100%;
  background: #7f9fb2;
  display: flex;
  align-items: center;
  justify-content: center;
`
const BarIcons = styled.div`
  display: flex;
  align-items: center;
  gap: ${(p) => p.$gap}px;
  padding: 0 ${(p) => p.$pad || 0}px;
  color: ${(p) => p.$c || "#eef6fa"};
`
const ScrollBtn = styled.div`
  width: 10px;
  height: 11px;
  background: #c8dce6;
  border: 1px solid #7f9db0;
  display: flex;
  align-items: center;
  justify-content: center;
  box-sizing: border-box;
  color: #333;
`
const Track = styled.div`
  flex: 1;
  height: 11px;
  background: #b6d0dd;
  display: flex;
`
const Thumb = styled.div`
  width: 220px;
  background: #9cb6c5;
`

const icon = (children) => <svg width="15" height="15" viewBox="0 0 16 16" fill="none">{children}</svg>
const hline = (c) => icon(<><line x1="2" x2="14" y1="8" y2="8" stroke={c} strokeWidth="1.5" /></>)
const nodeLine = (c) => icon(<><line x1="2" x2="14" y1="8" y2="8" stroke={c} strokeWidth="1.2" /><circle cx="8" cy="8" r="1.8" fill="#fff" stroke={c} /></>)
const diag = (c) => icon(<line x1="1" y1="15" x2="15" y2="1" stroke={c} strokeWidth="1.2" />)
const ellipse = (c, f) => icon(<><ellipse cx="8" cy="8" rx="6" ry="4" transform="rotate(-15 8 8)" fill={f} stroke={c} strokeWidth="1.5" /><circle cx="2" cy="12" r="1" fill="#23f" /><circle cx="14" cy="4" r="1" fill="#23f" /></>)
const bell = (extra) => icon(<><path d="M8 2c3 0 4 2 4 5l2 5H2l2-5c0-3 1-5 4-5z" fill="#ece020" stroke="#888" strokeWidth=".7" /><circle cx="8" cy="13.5" r="1.3" fill="#aa9" />{extra}</>)
const dots = (txt) => icon(<>{[[2,13],[5,9],[9,11],[12,5],[14,9],[7,4],[3,5],[11,14]].map(([x, y], i) => <circle key={i} cx={x} cy={y} r="1.1" fill={txt} />)}</>)

const tools = [
  <MousePointer2 key="c" size={12} color="#5c6f7a" fill="#a9bac4" />,
  <Search key="s" size={13} color="#222" strokeWidth={2.4} />,
  icon(<><rect x="1" y="8" width="8" height="6" stroke="#2a6ae0" strokeDasharray="1 1" /><circle cx="9" cy="6" r="4" stroke="#222" strokeWidth="1.5" /><line x1="12" y1="9" x2="15" y2="13" stroke="#222" strokeWidth="2" /></>),
  bell(<><line x1="3" y1="1" x2="13" y2="8" stroke="#2222cc" /><path d="M11 8l4 5-3 1z" fill="#dde" stroke="#555" strokeWidth=".5" /></>),
  bell(<><line x1="1" y1="2" x2="3" y2="4" stroke="#888" /><line x1="15" y1="2" x2="13" y2="4" stroke="#888" /></>),
  icon(<><path d="M2 13L5 3l3 8" stroke="#2222cc" strokeWidth="1.4" /><line x1="6" x2="14" y1="10" y2="10" stroke="#8aa" strokeWidth="1.5" /><path d="M12 11h3M13 11v4" stroke="#22c" strokeWidth="1.3" /></>),
  icon(<><line x1="1" x2="11" y1="7" y2="7" stroke="#e88" strokeWidth="1.4" strokeDasharray="2 1" /><path d="M11 7h4M12 7v5M12 9h2" stroke="#22c" strokeWidth="1.3" /></>),
  icon(<><path d="M2 4l11-2 1 9-11 2z" fill="#9bb5c5" stroke="#2a5ae0" strokeWidth="1.3" /></>),
  icon(<rect x="2" y="4" width="12" height="8" fill="#d89aa0" stroke="#e01818" strokeWidth="1.5" />),
  icon(<><line x1="2" y1="14" x2="13" y2="3" stroke="#111" strokeWidth="1.8" /><path d="M14 1l0 6-6-6z" fill="#111" /><circle cx="2.5" cy="13.5" r="1.6" stroke="#111" /></>),
  icon(<><rect x="2" y="2" width="12" height="12" rx="2" fill="#a9cbe8" stroke="#4a86c8" /><text x="8" y="12" fontSize="10" fontWeight="700" textAnchor="middle" fill="#111" fontFamily={FONT}>T</text></>),
  icon(<><circle cx="8" cy="8" r="6" fill="#b7e0c8" stroke="#3aa0c8" /><text x="8" y="12" fontSize="10" fontWeight="700" textAnchor="middle" fill="#0a6a2a" fontFamily={FONT}>T</text></>),
  icon(<><line x1="3" y1="13" x2="13" y2="3" stroke="#444" strokeWidth="1.3" /><circle cx="3" cy="13" r="1.7" fill="#dde" stroke="#333" /><circle cx="13" cy="3" r="1.7" fill="#dde" stroke="#333" /></>),
  nodeLine("#9df29d"), nodeLine("#49c749"), nodeLine("#1d7a1d"), nodeLine("#e01818"),
  icon(<g transform="rotate(-35 8 8)"><rect x="1" y="5" width="14" height="6" fill="#c8d2d8" stroke="#667" /><path d="M4 5v2M7 5v2M10 5v2M13 5v2" stroke="#556" /></g>),
  icon(<><rect x="1" y="2" width="14" height="12" fill="#a8c4cc" /><path d="M1 6h14" stroke="#46a" strokeDasharray="1 1" /><path d="M1 11l4-4 3 3 4-5 3 3" stroke="#6d9" /><path d="M1 13h14" stroke="#e77" strokeDasharray="1 1" /></>),
  ellipse("#e01818", "#b08a90"), ellipse("#8a6a40", "#b5a48a"), ellipse("#1d7a1d", "#8fb39a"), ellipse("#49d749", "#b4e0b4"),
  diag("#111"), diag("#2fa82f"), diag("#e01818"),
  hline("#111"), hline("#f08a7a"), hline("#22e022"), hline("#1d7a1d"), hline("#e01818"), hline("#8ab8ee"), hline("#0a1a9a"),
  icon(<line x1="8" x2="8" y1="1" y2="15" stroke="#556" strokeWidth="1.5" />),
  icon(<><path d="M14 13H1L11 3" stroke="#e04040" /><path d="M6 13a6 6 0 0 0-1-4" stroke="#2a6ae0" /><circle cx="13" cy="5" r="1.7" stroke="#2a6ae0" /></>),
  icon(<><circle cx="8" cy="8" r="5.5" stroke="#e87a30" strokeWidth="1.3" /><path d="M8 5v6M5 8h6" stroke="#2a4ae0" /></>),
  dots("#2a4ae0"), dots("#1a3ad0"),
  <Check key="k" size={16} color="#3aa83a" strokeWidth={4} />,
  <ThumbsUp key="t" size={14} color="#2f9a2f" fill="#4fbf4f" />,
  <X key="x" size={16} color="#e01818" strokeWidth={4.5} />,
]

const timeframes = [["12s",15],["144s",21],["1m",16],["12m",19],["56m",19],["1h",14],["4h",14],["D",12],["W",12],["M",11,true],["Q",11]]
const axisMain = [[49,"19.000"],[86,"18.000"],[122,"17.000"],[195,"15.000"],[231,"14.000"],[303,"12.000"],[339,"11.000"],[376,"10.000"],[412,"9.000"],[448,"8.000"],[485,"7.000"],[521,"6.000"],[557,"5.000"]]
const axisTags = [[118,"17.147,3","#20a020"],[158,"16.029,1","#d01818"],[274,"12.833,3","#1a1ab0"]]
const axisTrains = [[593,"80,024"],[608,"60"],[624,"40"],[585,"93,198","#f02020",1],[600,"78,226","#f02020",1],[617,"50","#2222dd",1],[638,"20",null,1],[651,"0",null,1]]
const axisWilly = [[665,"-6,3605","#20c020",1],[675,"-25","#2222aa",1],[688,"-50","#2222aa",1],[701,"-75","#e02020",1],[711,"-100",null,1]]
const axisAwesome = [[723,"4.766,7","#f09a20",1],[731,"3.178,4","#f020d0"],[738,"3.178,4","#f020d0",1],[758,"0","#f020d0",1],[764,"-2.000"],[777,"-4.000"]]
const axisBarra = [[790,"2,0291","#2222dd",1],[802,"1"],[811,"0,5000",null,1],[818,"0"]]

function Axis({ top, ticks }) {
  return (
    <AxisCol>
      {ticks.map(([y, t, c, box]) => <Tick key={t + y} $c={c} $box={box} style={{ top: y - top }}>{t}</Tick>)}
    </AxisCol>
  )
}

function IndicatorChip({ name, swatch, w }) {
  return (
    <PanelChip $w={w}>
      <RoundIcon $bg="#3f7cc4">×</RoundIcon>
      <Swatch $bg={swatch} />
      <span>&nbsp;{name}</span>
    </PanelChip>
  )
}

export default function App() {
  const years = Array.from({ length: 30 }, (_, i) => 2000 + i)
  return (
    <Page>
      <GlobalStyle />
      <TopBar>
        <Brand>
          <svg width="12" height="12" viewBox="0 0 12 12"><path d="M1 11V6M4 11V4M7 11V6M10 11V1" stroke="#2a9a3a" strokeWidth="2" /></svg>
        </Brand>
        <Grip />
        <Drop $w={36}>IBEX <ChevronDown size={9} strokeWidth={3} /></Drop>
        {timeframes.map(([t, w, on], i) => <Btn key={t} $w={w} $on={on} $ml={i === 0 ? 4 : 3}>{t}</Btn>)}
        <Drop $w={39} $ml={3}>&nbsp;1 mes <ChevronDown size={9} strokeWidth={3} /></Drop>
        <Btn $w={18} $ml={5}>5kU</Btn>
        <Btn $w={23} $on>10kU</Btn>
        <Btn $w={24} $ml={2}>35kU</Btn>
        <Drop $w={70} $ml={4}>&nbsp;10 k unidades <ChevronDown size={9} strokeWidth={3} /></Drop>
        <svg style={{ marginLeft: 5 }} width="16" height="15" viewBox="0 0 16 15"><path d="M1 3l4 5 4-3 6 4" stroke="#e04040" fill="none" /><path d="M1 7l4-3 4 5 6-5" stroke="#2a9a3a" fill="none" /><path d="M1 14v-3M4 14v-2M7 14v-3M10 14v-2M13 14v-3" stroke="#2a9a3a" strokeWidth="2" /></svg>
        <Drop $w={44} $ml={2}>Indicadores</Drop>
        <Drop $w={22} $ml={4}><ChevronDown size={9} strokeWidth={3} /></Drop>
        <Pause size={9} color="#eef5f8" fill="#eef5f8" style={{ marginLeft: 4 }} />
        <RoundIcon $bg="#7f8f98" style={{ width: 6, height: 6, margin: "0 0 0 8px" }} />
        <Change>-1,48 %</Change>
        <DateText>22 may 2026</DateText>
        <NameChip>España 35 Cash (1€)</NameChip>
        <TopRight>
          <RefreshCw size={13} color="#d82828" strokeWidth={2.6} />
          <Minus size={9} style={{ marginLeft: 3 }} />
          <Copy size={9} />
          <X size={10} strokeWidth={3} />
        </TopRight>
      </TopBar>
      <Body>
        <Sidebar>
          <SideHead><ChevronUp size={9} /></SideHead>
          {tools.map((t, i) => <ToolCell key={i} $on={i === 0}>{t}</ToolCell>)}
          <SideFold><ChevronDown size={9} strokeWidth={3} /></SideFold>
          <SideFoot>
            <Layers size={14} color="#222" />
            <MoreHorizontal size={14} color="#222" strokeWidth={3} />
          </SideFoot>
        </Sidebar>
        <Main>
          <Panel $h={553}>
            <Plot>
              <MainChart />
              <LegendRow>
                <RoundIcon $bg="#e23a3a" $r="1px">+</RoundIcon>
                <RoundIcon $bg="#2ea84a" $r="1px" style={{ margin: "0 3px 0 0" }}>+</RoundIcon>
                <RoundIcon $bg="#3f7cc4" style={{ margin: "0 1px 0 0" }}>×</RoundIcon>
                <Chip $w={40}><Swatch $bg="#eef3f6" />Precio</Chip>
                <Chip $w={11}><List size={8} /></Chip>
                <Chip $w={52}><Swatch $bg="#eef3f6" />Cierre (W)</Chip>
                <Chip $w={114}><Swatch $bg="#7b8b95" />Tunel Domenec v4 (t t t t t)</Chip>
                <Chip $w={95}><Swatch $bg="linear-gradient(90deg,#c22 0 33%,#2a2 33% 66%,#22c 66%)" />Control Total Doc v.6</Chip>
                <Chip $w={117}><Swatch $bg="#111" />Multi Avisos (3 f 3 1,5 70 f f)</Chip>
                <Chip $w={160}><Swatch $bg="#eef3f6" />DS_CotasHist (1 t t t 3 1 1 t f f f f f f f ...)</Chip>
              </LegendRow>
              <Title>IBEX, M<br />España 35 Cash (1€)</Title>
              <Source>IT-Finance.com - Tiempo Real</Source>
            </Plot>
            <Axis top={19} ticks={[...axisMain.map(([y, t]) => [y, t]), ...axisTags.map(([y, t, c]) => [y, t, c, 1])]} />
          </Panel>
          <Divider />
          <Panel $h={84}>
            <Plot><TrainsChart /><LegendRow><IndicatorChip name="Sistema de trenes Doc v4 (f f)" swatch="linear-gradient(90deg,#111 50%,#778 50%)" w={139} /></LegendRow></Plot>
            <Axis top={572} ticks={axisTrains} />
          </Panel>
          <Divider />
          <Panel $h={60}>
            <Plot><WillyChart /><LegendRow><IndicatorChip name="Willy Doc (t)" swatch="#7b8b95" w={75} /></LegendRow></Plot>
            <Axis top={656} ticks={axisWilly} />
          </Panel>
          <Divider />
          <Panel $h={68}>
            <Plot><AwesomeChart /><LegendRow><IndicatorChip name="Awesome Evolution Doc" swatch="#7b8b95" w={120} /></LegendRow></Plot>
            <Axis top={716} ticks={axisAwesome} />
          </Panel>
          <Divider />
          <Panel $h={47}>
            <Plot><BarraChart /><LegendRow><IndicatorChip name="Barra Fuerza Fondo Mercado v4 (f)" swatch="linear-gradient(90deg,#111 50%,#778 50%)" w={160} /></LegendRow></Plot>
            <Axis top={784} ticks={axisBarra} />
          </Panel>
          <DateAxis>{years.map((y) => <Year key={y}>{y}</Year>)}</DateAxis>
        </Main>
      </Body>
      <BottomBar>
        <PenBox>{icon(<><path d="M3 14L12 2" stroke="#e8b020" strokeWidth="2.2" /><path d="M2 5l5 9 1-8" stroke="#2a8a3a" strokeWidth="1.3" /><path d="M12 7l-3 7" stroke="#d03030" /></>)}</PenBox>
        <BarIcons $gap={7} $pad={3}>
          <Share2 size={12} />
          <MessageSquare size={12} color="#2a7ad8" fill="#8fc0ee" />
          {icon(<><rect x="3" y="2" width="10" height="12" fill="#ddd" stroke="#777" /><path d="M5 5h6M5 8l6 3M11 8l-6 3" stroke="#d03030" /></>)}
          {icon(<><path d="M8 1v14" stroke="#555" /><rect x="2" y="3" width="12" height="3" fill="#2ea84a" /><rect x="4" y="7" width="10" height="3" fill="#d03030" /><rect x="2" y="11" width="8" height="3" fill="#2ea84a" /></>)}
          {icon(<><rect x="1" y="2" width="10" height="9" fill="#cde" stroke="#2a7ad8" /><rect x="5" y="6" width="10" height="9" fill="#fff" stroke="#2a7ad8" /><path d="M6 13l3-3 2 2 3-4" stroke="#2a9a3a" /></>)}
        </BarIcons>
        <span style={{ fontSize: 11, color: "#4f6e80", padding: "0 3px 2px 0" }}>«</span>
        <ScrollBtn><ChevronLeft size={8} strokeWidth={3} /></ScrollBtn>
        <Track><Thumb /></Track>
        <ScrollBtn><ChevronRight size={8} strokeWidth={3} /></ScrollBtn>
        <BarIcons $gap={6} $pad={6}>
          <Undo2 size={12} color="#5d9ad0" strokeWidth={2.5} />
          <Redo2 size={12} color="#5d9ad0" strokeWidth={2.5} />
          {icon(<><path d="M3 13l6-6 3 3-6 6z" fill="#e04040" /><path d="M9 7l3-5 2 2-2 6z" fill="#2a9a3a" /></>)}
          <Search size={13} color="#111" strokeWidth={2.4} />
          <ZoomOut size={13} color="#111" strokeWidth={2.4} />
          <ZoomIn size={13} color="#111" strokeWidth={2.4} />
        </BarIcons>
      </BottomBar>
    </Page>
  )
}
